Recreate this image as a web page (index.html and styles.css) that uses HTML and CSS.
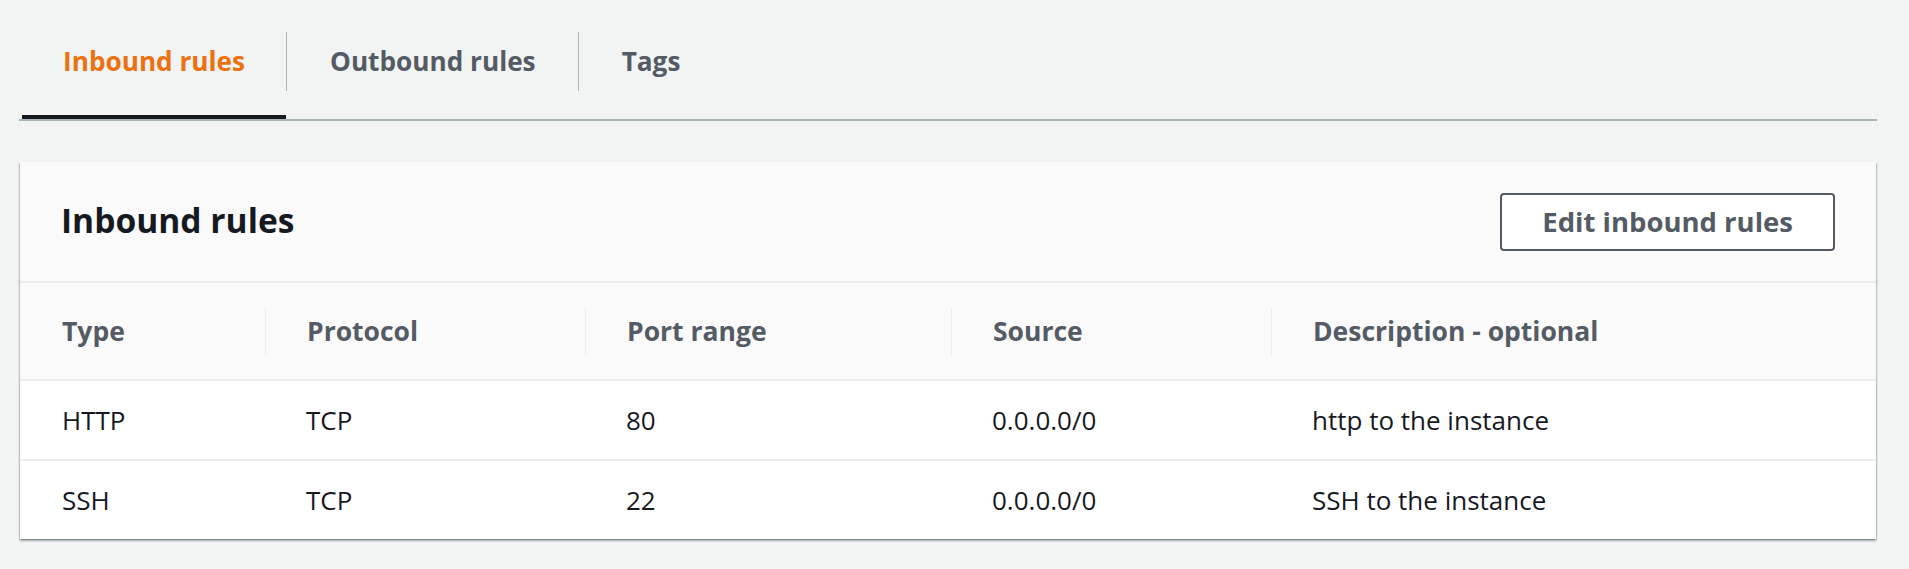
FILE: index.html
```html
<!DOCTYPE html>
<html lang="en">
<head>
<meta charset="utf-8">
<title>Inbound rules</title>
<link rel="stylesheet" href="styles.css">
</head>
<body>
<div class="page">
  <nav class="tabs">
    <a class="tab tab-first active">Inbound rules</a>
    <span class="tab-sep"></span>
    <a class="tab">Outbound rules</a>
    <span class="tab-sep"></span>
    <a class="tab">Tags</a>
  </nav>

  <section class="card">
    <header class="card-header">
      <h2 class="card-title">Inbound rules</h2>
      <button class="btn">Edit inbound rules</button>
    </header>
    <div class="table">
      <div class="row head">
        <div class="cell"><span class="cell-in">Type</span></div>
        <div class="cell"><span class="cell-in sep">Protocol</span></div>
        <div class="cell"><span class="cell-in sep">Port range</span></div>
        <div class="cell"><span class="cell-in sep">Source</span></div>
        <div class="cell"><span class="cell-in sep">Description - optional</span></div>
      </div>
      <div class="row body">
        <div class="cell">HTTP</div>
        <div class="cell">TCP</div>
        <div class="cell">80</div>
        <div class="cell">0.0.0.0/0</div>
        <div class="cell">http to the instance</div>
      </div>
      <div class="row body last">
        <div class="cell">SSH</div>
        <div class="cell">TCP</div>
        <div class="cell">22</div>
        <div class="cell">0.0.0.0/0</div>
        <div class="cell">SSH to the instance</div>
      </div>
    </div>
  </section>
</div>
</body>
</html>
```

FILE: styles.css
```css
html, body {
  margin: 0;
  padding: 0;
  background: #f2f3f3;
}

body {
  font-family: "Open Sans", "Noto Sans", sans-serif;
  color: #16191f;
}

.page {
  padding: 0 32px 30px 19px;
}

/* Tabs */
.tabs {
  display: flex;
  align-items: flex-start;
  border-bottom: 2px solid #aab7b8;
}

.tab {
  display: block;
  padding: 41px 42px 34px 43px;
  line-height: 40px;
  font-size: 26.2px;
  font-weight: 700;
  color: #545b64;
  border-bottom: 4px solid transparent;
  white-space: nowrap;
}

.tab-first {
  margin-left: 3px;
  padding-left: 41px;
  padding-right: 41px;
}

.tab.active {
  color: #ec7211;
  border-bottom-color: #16191f;
}

.tab-sep {
  width: 1px;
  height: 59px;
  margin-top: 32px;
  background: #aab7b8;
}

/* Card */
.card {
  margin: 41px 1px 0 1px;
  background: #ffffff;
  box-shadow: 0 2px 2px 0 rgba(0, 28, 36, 0.3),
              1px 1px 1px 0 rgba(0, 28, 36, 0.15),
              -1px 1px 1px 0 rgba(0, 28, 36, 0.15);
}

.card-header {
  box-sizing: border-box;
  height: 121px;
  padding: 0 41px 0 41px;
  display: flex;
  align-items: center;
  justify-content: space-between;
  background: #fafafa;
  border-bottom: 2px solid #eaeded;
}

.card-title {
  margin: 0 0 4px 0;
  font-size: 33.6px;
  font-weight: 700;
  color: #16191f;
  line-height: 44px;
}

.btn {
  font-family: inherit;
  height: 58px;
  box-sizing: border-box;
  padding: 0 40px;
  background: #ffffff;
  border: 2px solid #545b64;
  border-radius: 4px;
  font-size: 27.5px;
  font-weight: 700;
  color: #545b64;
  cursor: pointer;
}

/* Table */
.row {
  display: grid;
  grid-template-columns: 245px 320px 366px 320px 1fr;
}

.row.head {
  height: 98px;
  box-sizing: border-box;
  background: #fafafa;
  border-bottom: 2px solid #eaeded;
  align-items: center;
  font-size: 26.5px;
  font-weight: 700;
  color: #545b64;
}

.row.head .cell {
  display: flex;
  align-items: center;
}

.row.head .cell:first-child .cell-in {
  padding-left: 42px;
}

.cell-in {
  display: flex;
  align-items: center;
  height: 47px;
  white-space: nowrap;
}

.cell-in.sep {
  border-left: 1px solid #eaeded;
  padding-left: 41px;
}

.row.body {
  height: 80px;
  box-sizing: border-box;
  background: #ffffff;
  border-bottom: 2px solid #eaeded;
  align-items: center;
  font-size: 26px;
  color: #16191f;
}

.row.body.last {
  border-bottom: none;
  height: 78px;
}

.row.body .cell {
  padding-left: 41px;
  white-space: nowrap;
}

.row.body .cell:first-child {
  padding-left: 42px;
}
```
